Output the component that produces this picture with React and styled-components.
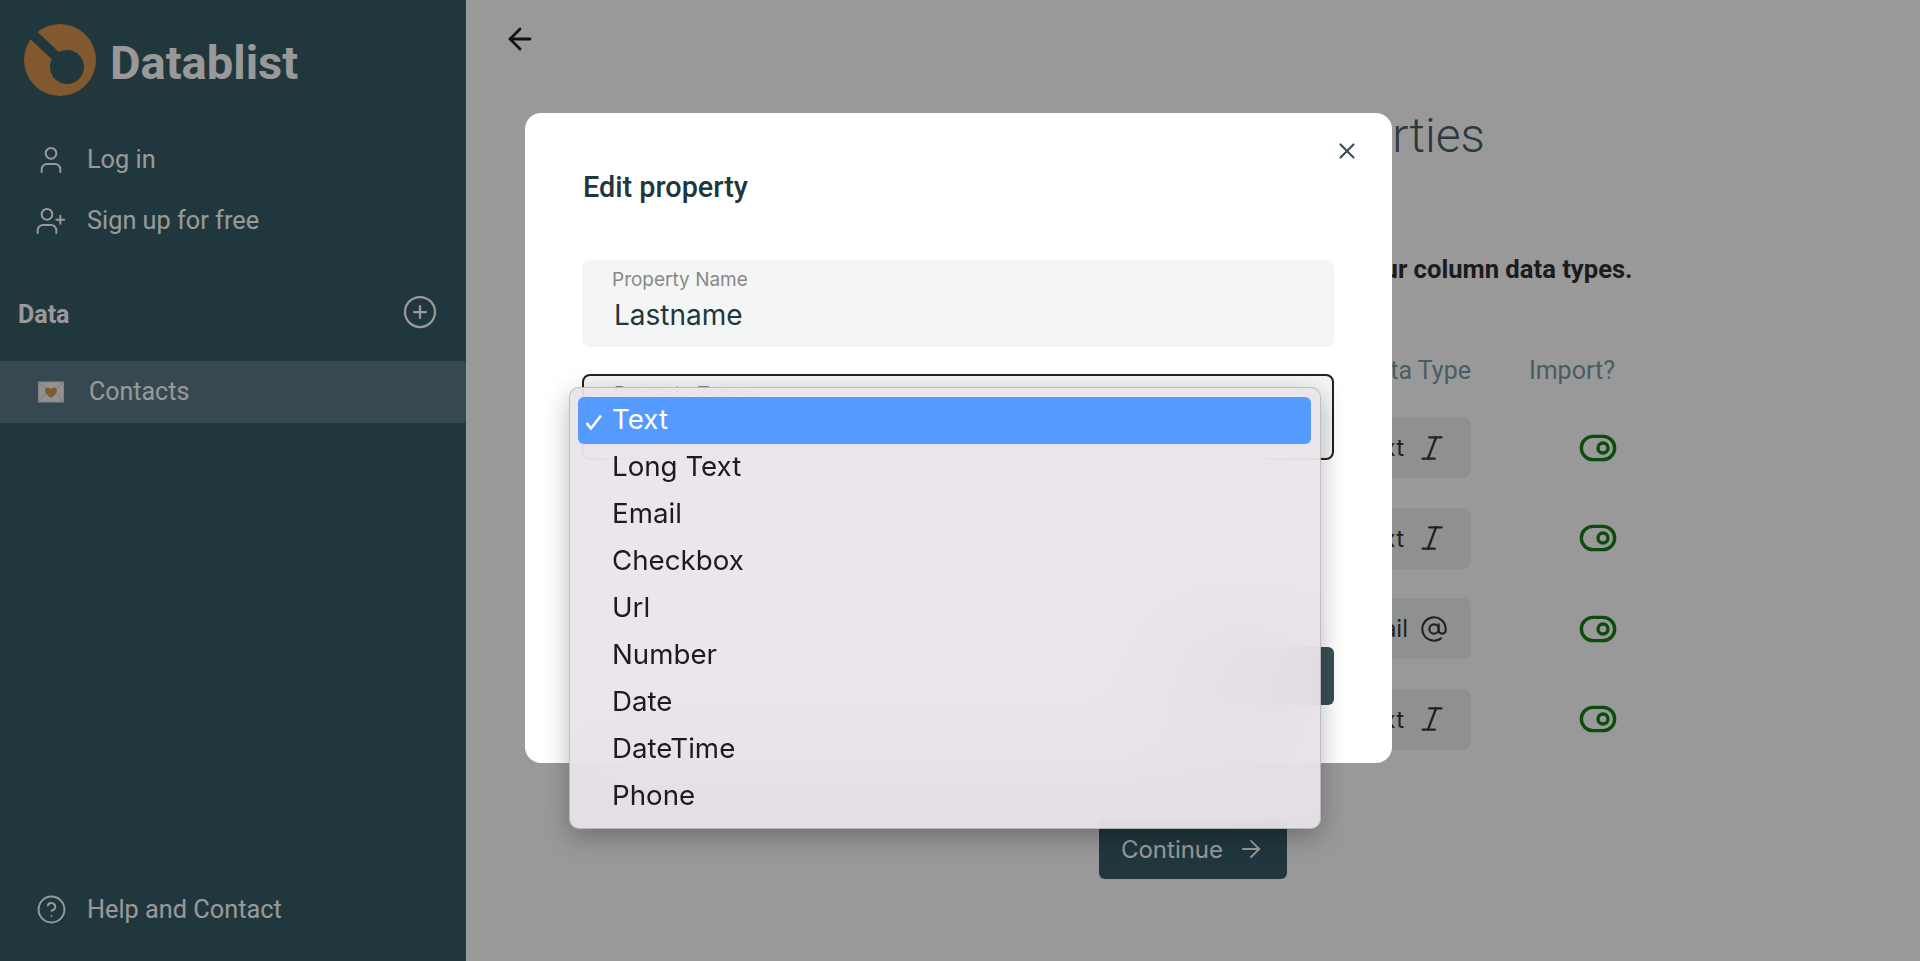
import React from "react";
import styled, { createGlobalStyle } from "styled-components";
import {
  ArrowLeft,
  ArrowRight,
  AtSign,
  CircleHelp,
  CirclePlus,
  Italic,
  ToggleRight,
  User,
  UserPlus,
  X,
} from "lucide-react";

const OPTIONS = ["Text", "Long Text", "Email", "Checkbox", "Url", "Number", "Date", "DateTime", "Phone"];

const ROWS = [
  { type: "Text", icon: "text" },
  { type: "Text", icon: "text" },
  { type: "Email", icon: "email" },
  { type: "Text", icon: "text" },
];

const Logo = () => (
  <svg width="72" height="72" viewBox="0 0 72 72">
    <circle cx="36" cy="36" r="36" fill="#d9934f" />
    <line x1="4" y1="6" x2="36" y2="36" stroke="#365c68" strokeWidth="10" />
    <circle cx="43" cy="43" r="17" fill="#365c68" />
  </svg>
);

const LoveLetter = () => (
  <svg width="26" height="22" viewBox="0 0 26 22">
    <rect x="0.5" y="1" width="25" height="20" fill="#f4f4f4" stroke="#dddddd" />
    <path d="M1 2l12 10L25 2M1 20l8-9M25 20l-8-9" stroke="#cccccc" fill="none" />
    <path d="M13 17c-4-3-6-5-6-7.500C7 7.500 8.500 6.500 10 6.500c1.300 0 2.300.7 3 1.800.7-1.100 1.700-1.800 3-1.800 1.500 0 3 1 3 3C19 12 17 14 13 17z" fill="#d9934f" />
  </svg>
);

const App = () => {
  return (
    <Page>
      <GlobalStyle />
      <Sidebar>
        <Brand>
          <Logo />
          <BrandName>Datablist</BrandName>
        </Brand>
        <NavList>
          <NavItem>
            <NavIcon>
              <User size={32} strokeWidth={1.5} />
            </NavIcon>
            Log in
          </NavItem>
          <NavItem>
            <NavIcon>
              <UserPlus size={32} strokeWidth={1.5} />
            </NavIcon>
            Sign up for free
          </NavItem>
        </NavList>
        <SectionHead>
          <SectionTitle>Data</SectionTitle>
          <CirclePlus size={36} strokeWidth={1.5} />
        </SectionHead>
        <Collection>
          <LoveLetter />
          <CollectionName>Contacts</CollectionName>
        </Collection>
        <HelpLink>
          <NavIcon>
            <CircleHelp size={31} strokeWidth={1.5} />
          </NavIcon>
          Help and Contact
        </HelpLink>
      </Sidebar>

      <Main>
        <BackButton>
          <ArrowLeft size={34} strokeWidth={2} />
        </BackButton>
        <Content>
          <Title>Review your data properties</Title>
          <Subtitle>Check the properties found in your file and then edit your column data types.</Subtitle>
          <PropertyTable>
            <HeadCell>Data Type</HeadCell>
            <HeadCell>Import?</HeadCell>
            {ROWS.map((row, i) => (
              <React.Fragment key={i}>
                <TypeChip>
                  {row.type}
                  {row.icon === "email" ? (
                    <AtSign size={28} strokeWidth={1.8} />
                  ) : (
                    <Italic size={32} strokeWidth={1.8} />
                  )}
                </TypeChip>
                <ToggleCell>
                  <ToggleRight size={40} strokeWidth={2} />
                </ToggleCell>
              </React.Fragment>
            ))}
          </PropertyTable>
          <ContinueButton>
            Continue
            <ArrowRight size={28} strokeWidth={1.6} />
          </ContinueButton>
        </Content>
      </Main>

      <Overlay>
        <Modal>
          <CloseButton>
            <X size={26} strokeWidth={2} />
          </CloseButton>
          <ModalTitle>Edit property</ModalTitle>
          <Field>
            <FieldLabel>Property Name</FieldLabel>
            <FieldValue>Lastname</FieldValue>
          </Field>
          <SelectWrap>
            <SelectField>
              <FieldLabel>Property Type</FieldLabel>
            </SelectField>
            <Popup>
              {OPTIONS.map((option, i) => (
                <PopupItem key={option} $selected={i === 0}>
                  {i === 0 && (
                    <CheckMark width="18" height="16" viewBox="0 0 18 16">
                      <path d="M1.500 9l4.500 5.500L16 1.500" fill="none" stroke="#fff" strokeWidth="2.600" />
                    </CheckMark>
                  )}
                  {option}
                </PopupItem>
              ))}
            </Popup>
          </SelectWrap>
          <ModalFooter>
            <SaveButton aria-label="Save" />
          </ModalFooter>
        </Modal>
      </Overlay>
    </Page>
  );
};

export default App;

const GlobalStyle = createGlobalStyle`
  html, body {
    margin: 0;
    padding: 0;
    height: 100%;
    overflow: hidden;
  }
  body {
    font-family: Roboto, "Liberation Sans", sans-serif;
    background: #fff;
  }
  * {
    box-sizing: border-box;
  }
`;

const Page = styled.div`
  display: flex;
  width: 100%;
  height: 100vh;
`;

const Sidebar = styled.aside`
  width: 466px;
  flex-shrink: 0;
  display: flex;
  flex-direction: column;
  background: #365c68;
  color: #fff;
`;

const Brand = styled.div`
  display: flex;
  align-items: center;
  gap: 14px;
  padding: 24px 24px 0;
`;

const BrandName = styled.div`
  padding-top: 4px;
  font-size: 47px;
  font-weight: 700;
  line-height: 67px;
`;

const NavList = styled.nav`
  display: flex;
  flex-direction: column;
  margin-top: 33px;
`;

const NavItem = styled.div`
  display: flex;
  align-items: center;
  height: 61px;
  padding-left: 31px;
  font-size: 25.300px;
`;

const NavIcon = styled.span`
  width: 40px;
  margin-right: 16px;
  display: flex;
  justify-content: center;
`;

const SectionHead = styled.div`
  display: flex;
  align-items: center;
  justify-content: space-between;
  height: 60px;
  margin-top: 31px;
  padding: 0 28px 0 18px;
`;

const SectionTitle = styled.div`
  font-size: 25px;
  font-weight: 700;
  padding-top: 4px;
`;

const Collection = styled.div`
  display: flex;
  align-items: center;
  gap: 25px;
  height: 62px;
  margin-top: 19px;
  padding-left: 38px;
  background: #5d7b85;
`;

const CollectionName = styled.div`
  font-size: 25px;
  margin-bottom: 2px;
`;

const HelpLink = styled(NavItem)`
  margin-top: auto;
  margin-bottom: 21px;
`;

const Main = styled.main`
  flex: 1;
  min-width: 0;
`;

const BackButton = styled.div`
  display: flex;
  height: 34px;
  margin: 22px 0 0 37px;
  color: #1f1f1f;
`;

const Content = styled.div`
  display: flex;
  flex-direction: column;
  align-items: center;
`;

const Title = styled.h1`
  margin: 50px 0 0;
  font-size: 48px;
  font-weight: 300;
  line-height: 60px;
  color: #46616a;
`;

const Subtitle = styled.p`
  margin: 87px 0 0;
  font-size: 25.600px;
  font-weight: 700;
  line-height: 32px;
  white-space: nowrap;
  color: #2f2f2f;
`;

const PropertyTable = styled.div`
  display: grid;
  grid-template-columns: 230px 144px;
  justify-content: end;
  justify-items: end;
  width: 844px;
  margin-top: 70px;
  row-gap: 28.400px;
`;

const HeadCell = styled.div`
  height: 32px;
  margin-bottom: 1px;
  font-size: 25px;
  line-height: 32px;
  color: #7c9ba5;
`;

const TypeChip = styled.div`
  display: flex;
  align-items: center;
  justify-content: flex-end;
  gap: 12px;
  width: 230px;
  height: 61px;
  margin-top: 1px;
  padding-right: 23px;
  border-radius: 8px;
  background: #edf2ef;
  color: #383838;
  font-family: Inter, Roboto, sans-serif;
  font-size: 24px;
`;

const ToggleCell = styled.div`
  display: flex;
  align-items: center;
  height: 61px;
  margin-top: 1px;
  margin-right: -3px;
  color: #147f14;
`;

const ContinueButton = styled.button`
  display: flex;
  align-items: center;
  gap: 14px;
  height: 59px;
  margin-top: 70px;
  padding: 0 22px 0 22px;
  border: none;
  border-radius: 6px;
  background: #365c68;
  color: #fff;
  font-family: Inter, Roboto, sans-serif;
  font-size: 24px;
`;

const Overlay = styled.div`
  position: fixed;
  inset: 0;
  display: flex;
  justify-content: center;
  align-items: flex-start;
  padding: 113px 3px 0 0;
  background: rgba(0, 0, 0, 0.4);
`;

const Modal = styled.div`
  position: relative;
  width: 867px;
  height: 650px;
  padding: 58px 58px 58px 57px;
  border-radius: 16px;
  background: #fff;
`;

const CloseButton = styled.div`
  position: absolute;
  top: 25px;
  right: 32px;
  display: flex;
  color: #3a4f55;
`;

const ModalTitle = styled.h2`
  margin: 0 0 57px 1px;
  font-size: 28.800px;
  font-weight: 500;
  line-height: 32px;
  color: #20373e;
`;

const Field = styled.div`
  height: 87px;
  padding: 7px 30px 0;
  border-radius: 8px;
  background: #f4f6f6;
`;

const SelectWrap = styled.div`
  position: relative;
  margin-top: 27px;
`;

const SelectField = styled(Field)`
  height: 86px;
  border: 2px solid #2a1f18;
  padding-top: 5px;
`;

const FieldLabel = styled.div`
  font-family: Inter, Roboto, sans-serif;
  font-size: 19px;
  line-height: 26px;
  color: #888;
`;

const FieldValue = styled.div`
  margin: 2px 0 0 2px;
  font-family: Inter, Roboto, sans-serif;
  font-size: 28px;
  line-height: 40px;
  color: #20373e;
`;

const Popup = styled.div`
  position: absolute;
  top: 13px;
  left: -13px;
  width: 752px;
  height: 442px;
  padding: 9px 9px 8px 8px;
  border: 1px solid rgba(0, 0, 0, 0.18);
  border-radius: 10px;
  background: rgba(233, 228, 234, 0.92);
  backdrop-filter: blur(50px);
  box-shadow: 0 8px 26px rgba(0, 0, 0, 0.28);
`;

const PopupItem = styled.div`
  position: relative;
  height: 47px;
  padding-left: 34px;
  border-radius: 6px;
  font-family: Inter, Roboto, sans-serif;
  font-size: 27.700px;
  line-height: 45px;
  color: ${(p) => (p.$selected ? "#fff" : "#1c1c1e")};
  background: ${(p) => (p.$selected ? "#549aff" : "transparent")};
`;

const CheckMark = styled.svg`
  position: absolute;
  left: 7px;
  top: 17px;
`;

const ModalFooter = styled.div`
  display: flex;
  justify-content: flex-end;
  margin-top: 187px;
`;

const SaveButton = styled.button`
  width: 164px;
  height: 58px;
  border: none;
  border-radius: 6px;
  background: #3a4f55;
`;
